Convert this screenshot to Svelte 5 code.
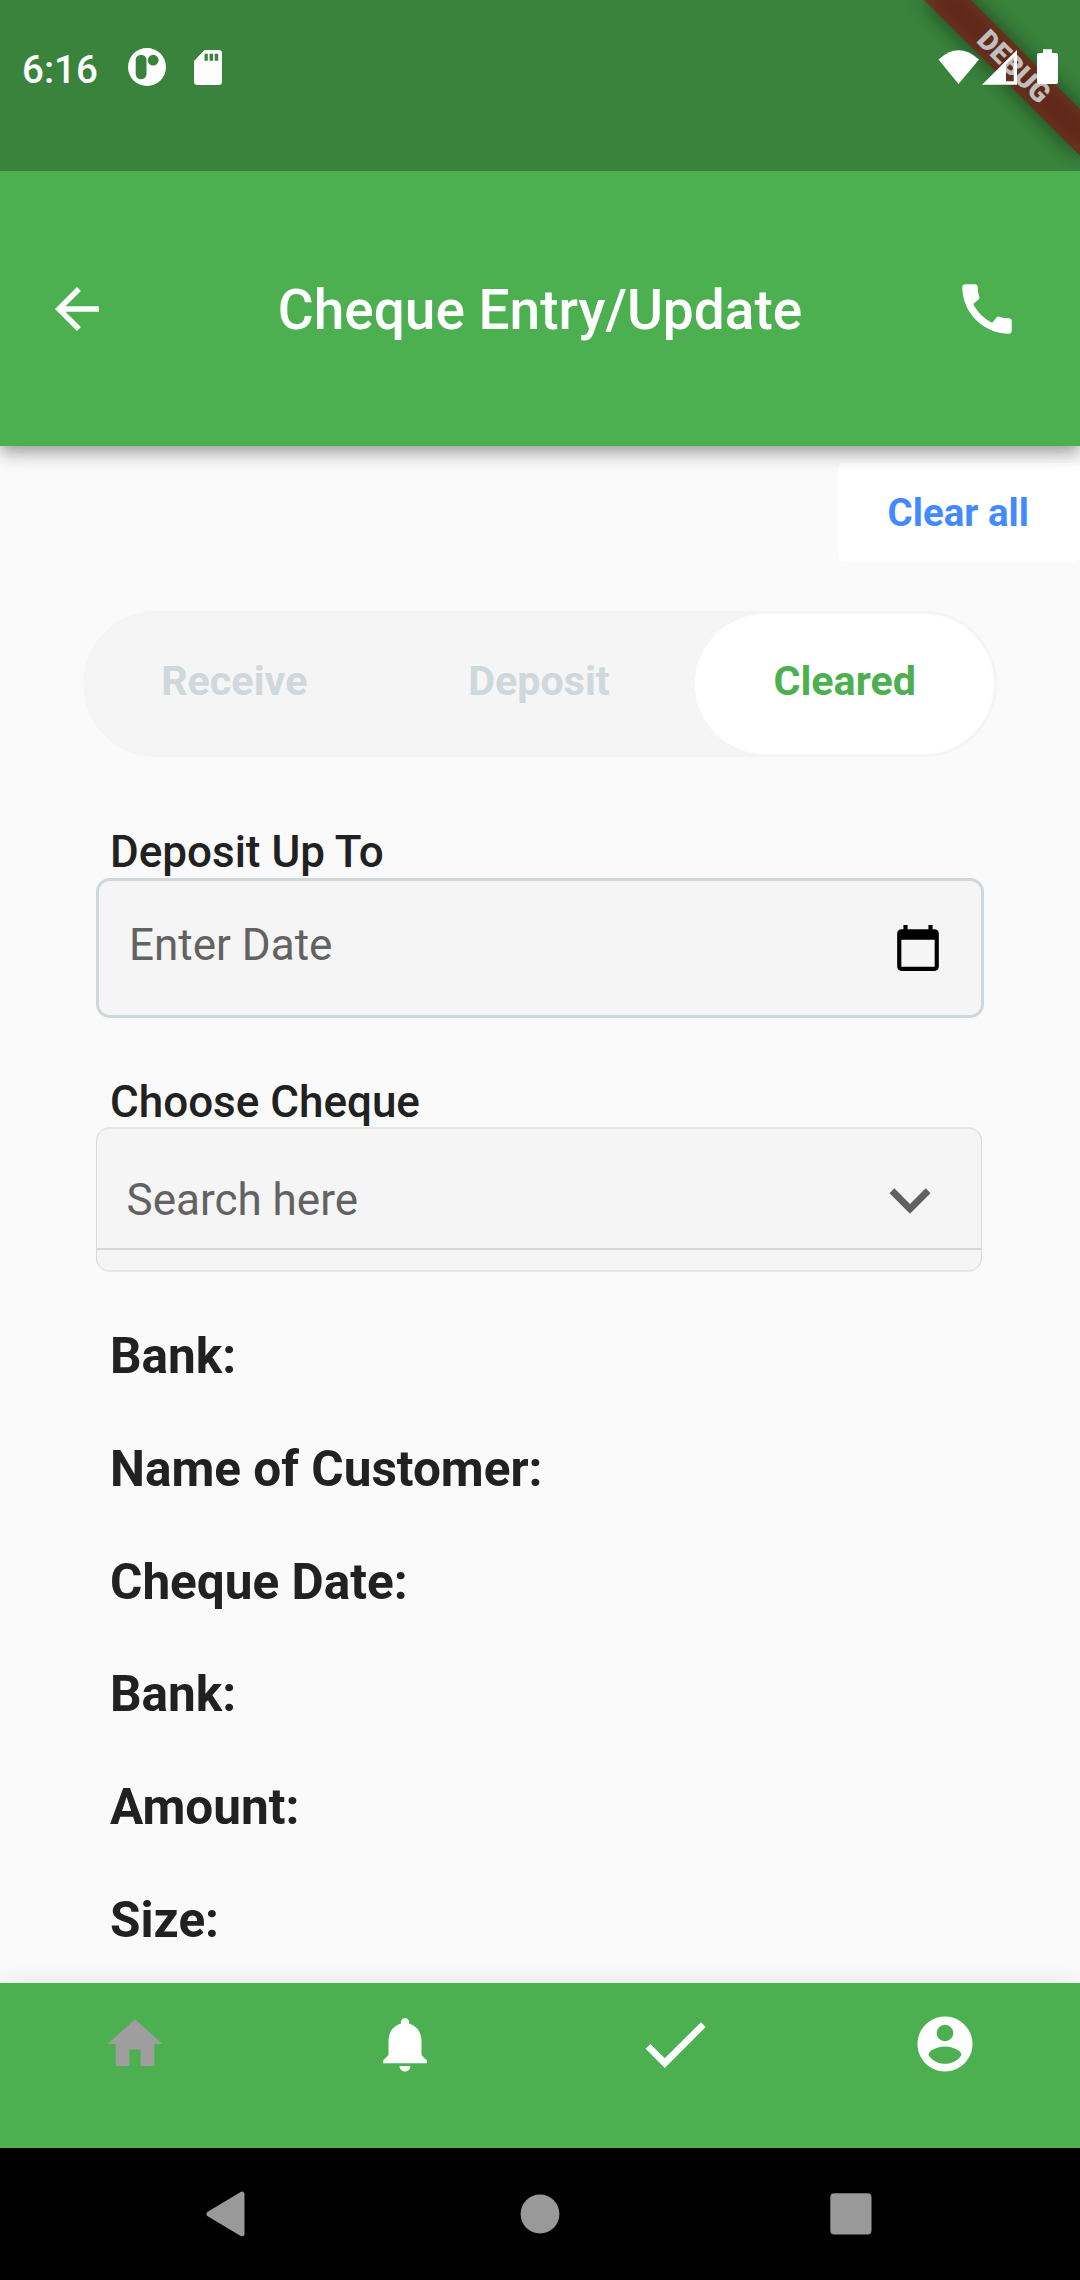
<script>
  let tabs = ['Receive', 'Deposit', 'Cleared'];
  let selected = $state('Cleared');
  let details = ['Bank:', 'Name of Customer:', 'Cheque Date:', 'Bank:', 'Amount:', 'Size:'];
</script>

<div class="screen">
  <div class="status">
    <div class="banner">
      <div class="banner-shadow"></div>
      <div class="banner-face">DEBUG</div>
    </div>
    <div class="scrim"></div>
    <div class="status-row">
      <span class="time">6:16</span>
      <svg class="app-dot" viewBox="0 0 38 38" width="38" height="38">
        <circle cx="19" cy="19" r="19" fill="#fff" />
        <rect x="7.7" y="6.7" width="10.8" height="24.6" rx="5.4" fill="#39833c" />
        <circle cx="25.2" cy="12.2" r="5.4" fill="#39833c" />
      </svg>
      <svg class="sd" viewBox="0 0 28 35" width="28" height="35">
        <path fill="#fff" d="M10.5 0H24.5Q28 0 28 3V31.500Q28 35 24.500 35H3.500Q0 35 0 31.500V11Z" />
        <path fill="#39833c" d="M10.500 3.700h3.300v7h-3.300zM15.600 3.700h3.500v7h-3.500zM20.700 3.700h3.500v7h-3.500z" />
      </svg>
      <span class="grow"></span>
      <svg class="signals" viewBox="0 0 121 36" width="121" height="36" fill="#fff">
        <path d="M0.500 10.500Q20.500 -8 41 10.500L20.500 35Z" />
        <path fill-rule="evenodd" d="M44 35.700L79 1V35.700ZM68 15.500V32.300H75.700V8Z" />
        <path d="M105 0.300h9v3.700h4Q120 4 120 6V33Q120 35 118 35H101Q99 35 99 33V6Q99 4 101 4h4z" />
      </svg>
    </div>
  </div>

  <header>
    <button class="icon back" aria-label="Back">
      <svg viewBox="0 0 24 24" width="66" height="66"><path fill="#fff" d="M20 11H7.830l5.590-5.590L12 4l-8 8 8 8 1.410-1.410L7.830 13H20v-2z" /></svg>
    </button>
    <h1>Cheque Entry/Update</h1>
    <button class="icon call" aria-label="Call">
      <svg viewBox="0 0 24 24" width="66" height="66"><path fill="#fff" d="M20.010 15.380c-1.230 0-2.420-.2-3.530-.56-.35-.12-.74-.03-1.010.24l-1.570 1.970c-2.830-1.350-5.480-3.900-6.890-6.830l1.950-1.660c.27-.28.35-.67.24-1.020-.37-1.110-.56-2.300-.56-3.530 0-.54-.45-.99-.99-.99H4.190C3.650 3 3 3.240 3 3.990 3 13.280 10.730 21 20.010 21c.71 0 .99-.63.99-1.180v-3.450c0-.54-.45-.99-.99-.99z" /></svg>
    </button>
  </header>

  <main>
    <div class="clear-row"><button class="clear">Clear all</button></div>

    <div class="tabs">
      {#each tabs as tab}
        <button class="tab" class:active={tab === selected} onclick={() => (selected = tab)}>{tab}</button>
      {/each}
    </div>

    <div class="label first">Deposit Up To</div>
    <div class="field date">
      <span>Enter Date</span>
      <svg viewBox="0 0 24 24" width="50" height="50"><path d="M20 3h-1V1h-2v2H7V1H5v2H4c-1.100 0-2 .9-2 2v16c0 1.100.9 2 2 2h16c1.100 0 2-.9 2-2V5c0-1.100-.9-2-2-2zm0 18H4V8h16v13z" /></svg>
    </div>

    <div class="label second">Choose Cheque</div>
    <div class="field select">
      <div class="select-row">
        <span>Search here</span>
        <svg viewBox="0 0 24 24" width="82" height="82"><path fill="#616161" d="M7.410 8.590L12 13.170l4.590-4.580L18 10l-6 6-6-6 1.410-1.410z" /></svg>
      </div>
    </div>

    <div class="details">
      {#each details as item}
        <div class="detail">{item}</div>
      {/each}
    </div>
  </main>

  <nav class="tabbar">
    <svg viewBox="0 0 24 24" width="66" height="66"><path fill="#9e9e9e" d="M10 20v-6h4v6h5v-8h3L12 3 2 12h3v8z" /></svg>
    <svg viewBox="0 0 24 24" width="66" height="66"><path fill="#fff" d="M12 22c1.100 0 2-.9 2-2h-4c0 1.100.89 2 2 2zm6-6v-5c0-3.070-1.640-5.640-4.500-6.320V4c0-.83-.67-1.500-1.500-1.500s-1.500.67-1.500 1.500v.68C7.630 5.360 6 7.920 6 11v5l-2 2v1h16v-1l-2-2z" /></svg>
    <svg viewBox="0 0 24 24" width="82" height="82"><path fill="#fff" d="M9 16.200L4.800 12l-1.400 1.400L9 19 21 7l-1.400-1.400L9 16.200z" /></svg>
    <svg viewBox="0 0 24 24" width="66" height="66"><path fill="#fff" d="M12 2C6.480 2 2 6.480 2 12s4.480 10 10 10 10-4.480 10-10S17.520 2 12 2zm0 3c1.660 0 3 1.340 3 3s-1.340 3-3 3-3-1.340-3-3 1.340-3 3-3zm0 14.200c-2.500 0-4.710-1.280-6-3.220.03-1.990 4-3.080 6-3.080 1.990 0 5.970 1.090 6 3.080-1.290 1.940-3.500 3.220-6 3.220z" /></svg>
  </nav>

  <div class="system">
    <svg viewBox="0 0 42 46" width="42" height="46"><path fill="#999" stroke="#999" stroke-width="5" stroke-linejoin="round" d="M4 23L37 3.200V42.800Z" /></svg>
    <svg class="home" viewBox="0 0 40 40" width="40" height="40"><circle cx="20" cy="20" r="19.400" fill="#999" /></svg>
    <svg viewBox="0 0 42 42" width="42" height="42"><rect x="0.300" y="0.300" width="41.200" height="41.200" rx="4" fill="#999" /></svg>
  </div>
</div>

<style>
  :global(body) {
    margin: 0;
    background: #fafafa;
  }

  .screen {
    width: 1080px;
    height: 2280px;
    display: flex;
    flex-direction: column;
    overflow: hidden;
    background: #fafafa;
    color: #212121;
    font-family: Roboto, sans-serif;
  }

  .screen svg {
    display: block;
    flex: none;
  }

  button {
    margin: 0;
    padding: 0;
    border: 0;
    background: none;
    font: inherit;
    color: inherit;
  }

  .status {
    position: relative;
    z-index: 2;
    flex: none;
    height: 171px;
    overflow: hidden;
    background: #4caf50;
  }

  /* Corner ribbon, centred on the diagonal of the top-right corner. */
  .banner {
    position: absolute;
    left: 904px;
    top: 49.5px;
    width: 220px;
    height: 33px;
    transform: rotate(45deg);
  }

  .banner-shadow {
    position: absolute;
    inset: 0;
    background: rgba(0, 0, 0, 0.5);
    filter: blur(11px);
  }

  .banner-face {
    position: relative;
    height: 33px;
    background: rgba(183, 28, 28, 0.627);
    color: #fff;
    font-size: 28px;
    font-weight: 900;
    line-height: 33px;
    text-align: center;
  }

  .scrim {
    position: absolute;
    inset: 0;
    background: rgba(0, 0, 0, 0.25);
  }

  .status-row {
    position: relative;
    display: flex;
    align-items: flex-start;
    padding: 48px 21px 0 22px;
    color: #fff;
  }

  .time {
    width: 106.300px;
    padding-top: 1px;
    font-size: 38.500px;
    font-weight: 500;
    line-height: 42px;
  }

  .app-dot {
    margin-top: 0.3px;
  }

  .sd {
    margin: 2px 0 0 28px;
  }

  .grow {
    flex: 1;
  }

  .signals {
    margin-top: 1px;
  }

  header {
    position: relative;
    z-index: 1;
    flex: none;
    height: 275px;
    display: grid;
    grid-template-columns: 186px 1fr 186px;
    align-items: center;
    background: #4caf50;
    color: #fff;
    box-shadow:
      0 5.500px 11px -2.750px rgba(0, 0, 0, 0.2),
      0 11px 13.750px 0 rgba(0, 0, 0, 0.14),
      0 2.750px 27.500px 0 rgba(0, 0, 0, 0.12);
  }

  .icon {
    display: flex;
    padding-top: 1px;
  }

  .back {
    padding-left: 44px;
  }

  .call {
    justify-content: flex-end;
    padding-right: 60.500px;
  }

  h1 {
    margin: 0;
    padding-top: 3px;
    font-size: 55px;
    font-weight: 500;
    line-height: 64px;
    text-align: center;
    white-space: nowrap;
  }

  main {
    flex: 1;
    min-height: 0;
  }

  .clear-row {
    display: flex;
    justify-content: flex-end;
    padding-top: 17px;
  }

  .clear {
    width: 242px;
    height: 98.500px;
    padding-right: 1.500px;
    border-radius: 5.500px;
    background: #fff;
    color: #448aff;
    font-size: 38.500px;
    font-weight: 700;
  }

  .tabs {
    display: grid;
    grid-template-columns: repeat(3, 1fr);
    width: 914px;
    height: 145.500px;
    margin: 49.500px 0 0 83px;
    border-radius: 73px;
    background: #f5f5f5;
  }

  .tab {
    margin: 3px;
    padding: 0 2px 6px 0;
    border-radius: 70px;
    color: #cfd8dc;
    font-size: 41.250px;
    font-weight: 700;
  }

  .tab.active {
    padding-right: 0;
    background: #fff;
    color: #4caf50;
  }

  .label {
    padding-left: 110px;
    font-size: 44px;
    font-weight: 500;
    line-height: 52px;
  }

  .label.first {
    margin-top: 69.500px;
  }

  .label.second {
    margin-top: 59px;
    line-height: 50px;
  }

  .field {
    box-sizing: border-box;
    margin-left: 96px;
    border-radius: 14px;
    background: #f5f5f5;
    color: #626262;
    font-size: 44px;
    line-height: 52px;
  }

  .date {
    display: flex;
    align-items: center;
    justify-content: space-between;
    width: 888px;
    height: 140px;
    padding: 0 38px 0 30px;
    border: 3px solid #cfd8dc;
  }

  .date span {
    padding-bottom: 6px;
  }

  .select {
    width: 886px;
    height: 145px;
    border: 1px solid #d3dbdf;
    border-width: 2px 1px;
    border-top-color: #e1e7ea;
    border-bottom-color: #e1e7ea;
  }

  .select-row {
    display: flex;
    align-items: center;
    justify-content: space-between;
    height: 97px;
    padding: 22px 30.500px 0 29.500px;
    border-bottom: 2px solid #d6d6d6;
  }

  .details {
    padding: 28px 0 0 110px;
  }

  .detail {
    font-size: 49.500px;
    font-weight: 700;
    line-height: 112.800px;
  }

  .tabbar {
    position: relative;
    z-index: 1;
    flex: none;
    box-sizing: border-box;
    height: 165px;
    padding-bottom: 43px;
    display: grid;
    grid-template-columns: repeat(4, 1fr);
    align-items: center;
    justify-items: center;
    background: #4caf50;
    box-shadow: 0 2.750px 22px 0 rgba(0, 0, 0, 0.12);
  }

  .system {
    position: relative;
    z-index: 2;
    flex: none;
    box-sizing: border-box;
    height: 132px;
    padding: 0 208px 0 205px;
    display: flex;
    align-items: center;
    justify-content: space-between;
    background: #000;
  }

  .home {
    margin-left: 3px;
  }
</style>
